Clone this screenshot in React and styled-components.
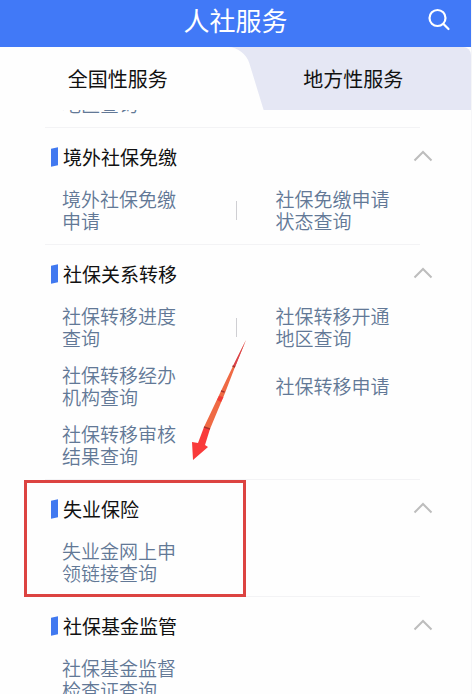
import React from 'react';
import styled, { createGlobalStyle, css } from 'styled-components';

const GlobalStyle = createGlobalStyle`
  *, *::before, *::after { box-sizing: border-box; }
  body {
    margin: 0;
    background: #fff;
    font-family: "Noto Sans CJK SC", "Noto Sans", sans-serif;
  }
  button { font: inherit; border: 0; padding: 0; background: none; cursor: pointer; }
`;

const Page = styled.div`
  height: 100vh;
  display: flex;
  flex-direction: column;
  overflow: hidden;
  background: #fefefe;
  border-right: 1px solid #f6f6f8;
`;

const Header = styled.header`
  flex: none;
  height: 47px;
  padding: 0 20px;
  display: grid;
  grid-template-columns: 24px 1fr 24px;
  align-items: center;
  background: #4179f7;
  color: #fff;
`;

const Title = styled.h1`
  grid-column: 2;
  margin: 0;
  padding-bottom: 8px;
  font-size: 26px;
  line-height: 36px;
  font-weight: 400;
  text-align: center;
`;

const SearchButton = styled.button`
  height: 40px;
  padding-bottom: 8px;
  color: #fff;
  svg { display: block; margin: auto; }
`;

const Tabs = styled.nav`
  flex: none;
  display: grid;
  grid-template-columns: 1fr 1fr;
  height: 63px;
  overflow: hidden;
  border-top-right-radius: 8px;
  background: #e5e7f4;
`;

const Tab = styled.button`
  position: relative;
  z-index: 0;
  color: #111;
  font-size: 20px;
  font-weight: 400;
  ${({ $active }) => $active && css`
    &::before {
      content: '';
      position: absolute;
      z-index: -1;
      inset: 0 -18px 0 -40px;
      background: #fefefe;
      border-top-right-radius: 16px;
      transform: skewX(17deg);
    }
  `}
`;

const List = styled.main`
  flex: 1;
  min-height: 0;
  overflow: hidden;
`;

const Section = styled.section`
  position: relative;
  padding-bottom: 12px;
  ${({ $scrolled }) => $scrolled && css`margin-top: -17px;`}
  ${({ $highlight }) => $highlight && css`
    z-index: 1;
    &::after {
      content: '';
      position: absolute;
      top: 1px;
      bottom: -1px;
      left: 24px;
      width: 222px;
      border: 3px solid #dc4341;
      pointer-events: none;
    }
  `}
`;

const Divider = styled.hr`
  height: 1px;
  margin: 0 51px 0 45px;
  border: 0;
  background: #f3f3f5;
`;

const SectionHead = styled.div`
  display: flex;
  align-items: center;
  gap: 5px;
  height: 60px;
  padding: 0 38px 2px 51px;
`;

const Marker = styled.span`
  width: 7px;
  height: 18px;
  background: #4179f0;
  transform: skewY(-14deg);
`;

const SectionTitle = styled.h2`
  flex: 1;
  margin: 0;
  font-size: 19px;
  line-height: 28px;
  font-weight: 400;
  color: #111;
`;

const Toggle = styled.button`
  padding-bottom: 2px;
  color: #bdbdbd;
  svg { display: block; }
`;

const Items = styled.div`
  display: grid;
  grid-template-columns: 1fr 1fr;
  row-gap: 15px;
`;

const Item = styled.div`
  display: flex;
  align-items: center;
  min-height: ${({ $short }) => ($short ? 22 : 44)}px;
  padding-left: 62px;
  &:nth-child(even) { padding-left: 40px; }
  ${({ $divided }) => $divided && css`
    background: linear-gradient(#cfcfd3, #cfcfd3) left center / 1px 19px no-repeat;
  `}
`;

const ItemLink = styled.a`
  width: 6em;
  font-size: 19px;
  line-height: 22px;
  font-weight: 350;
  color: #627896;
  text-decoration: none;
`;

const Arrow = styled.svg`
  position: absolute;
  left: 190px;
  bottom: 17px;
  pointer-events: none;
`;

const SearchIcon = () => (
  <svg width="24" height="24" viewBox="0 0 24 24" fill="none" stroke="currentColor" strokeWidth="2.2" strokeLinecap="round">
    <circle cx="10.500" cy="10" r="8" />
    <path d="M16.500 16l5 5" />
  </svg>
);

const Chevron = () => (
  <svg width="20" height="12" viewBox="0 0 20 12" fill="none" stroke="currentColor" strokeWidth="2">
    <path d="M1.5 10.5L10 2l8.500 8.500" />
  </svg>
);

const PointerArrow = () => (
  <Arrow width="58" height="122" viewBox="0 0 58 122" aria-hidden="true">
    <path d="M56 0L43 26L31 51L14 87L20 89L35 53L45 27Z" fill="#ef6a44" />
    <path d="M56 0L43 26L45 27Z" fill="#d9414c" />
    <path d="M29 56L33.500 57L31 62L27 60Z" fill="#f33b38" />
    <path d="M14 87L20 89L15 105L18 107L3 120L2 102L8 103Z" fill="#f93a3a" />
    <path d="M42.500 26L45 27M31 51L34.500 52M14 87L20 89" stroke="#a8322c" strokeWidth="1.500" />
  </Arrow>
);

const sections = [
  { items: ['地区查询'], scrolled: true },
  { title: '境外社保免缴', items: ['境外社保免缴申请', '社保免缴申请状态查询'] },
  {
    title: '社保关系转移',
    items: ['社保转移进度查询', '社保转移开通地区查询', '社保转移经办机构查询', '社保转移申请', '社保转移审核结果查询'],
    arrow: true,
  },
  { title: '失业保险', items: ['失业金网上申领链接查询'], highlight: true },
  { title: '社保基金监管', items: ['社保基金监督检查证查询'] },
];

export default function App() {
  return (
    <>
      <GlobalStyle />
      <Page>
        <Header>
          <Title>人社服务</Title>
          <SearchButton aria-label="搜索"><SearchIcon /></SearchButton>
        </Header>
        <Tabs>
          <Tab $active>全国性服务</Tab>
          <Tab>地方性服务</Tab>
        </Tabs>
        <List>
          {sections.map(({ title, items, scrolled, highlight, arrow }) => (
            <Section key={items[0]} $scrolled={scrolled} $highlight={highlight}>
              {title && (
                <>
                  <Divider />
                  <SectionHead>
                    <Marker />
                    <SectionTitle>{title}</SectionTitle>
                    <Toggle aria-label={`收起${title}`}><Chevron /></Toggle>
                  </SectionHead>
                </>
              )}
              <Items>
                {items.map((label, i) => (
                  <Item key={label} $short={scrolled} $divided={i === 1}>
                    <ItemLink href="#">{label}</ItemLink>
                  </Item>
                ))}
              </Items>
              {arrow && <PointerArrow />}
            </Section>
          ))}
        </List>
      </Page>
    </>
  );
}
